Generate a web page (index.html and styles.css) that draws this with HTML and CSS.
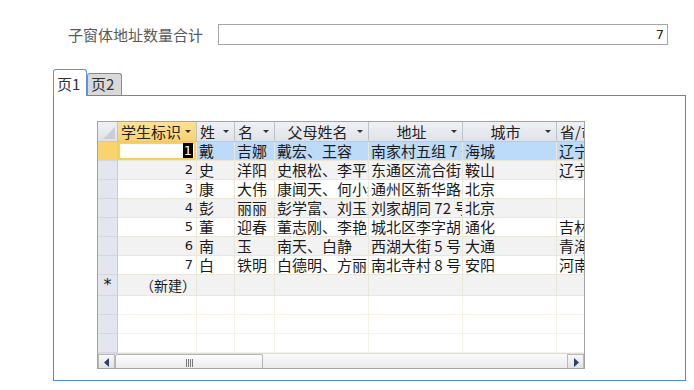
FILE: index.html
```html
<!DOCTYPE html>
<html lang="zh">
<head>
<meta charset="utf-8">
<link rel="stylesheet" href="styles.css">
</head>
<body>
<div class="summary">
  <span class="summary-label">子窗体地址数量合计</span>
  <div class="summary-box">7</div>
</div>
<div class="tabs">
  <div class="tab active">页1</div>
  <div class="tab">页2</div>
</div>
<div class="panel">
  <div class="sheet">
    <table class="grid">
      <colgroup>
        <col class="c-sel"><col class="c-id"><col class="c-xing"><col class="c-ming"><col class="c-fm"><col class="c-addr"><col class="c-city"><col class="c-prov">
      </colgroup>
      <thead>
        <tr>
          <th class="sel-all"><span class="corner"></span></th>
          <th class="hd hd-active"><span class="ht">学生标识</span><span class="dd"></span></th>
          <th class="hd"><span class="ht">姓</span><span class="dd"></span></th>
          <th class="hd"><span class="ht">名</span><span class="dd"></span></th>
          <th class="hd center"><span class="ht">父母姓名</span><span class="dd"></span></th>
          <th class="hd center"><span class="ht">地址</span><span class="dd"></span></th>
          <th class="hd center"><span class="ht">城市</span><span class="dd"></span></th>
          <th class="hd"><span class="ht">省/市</span><span class="dd"></span></th>
        </tr>
      </thead>
      <tbody>
        <tr class="row cur">
          <td class="rs rs-cur"></td>
          <td class="num focus"><span class="caret">1</span></td>
          <td>戴</td><td>吉娜</td><td>戴宏、王容</td><td>南家村五组 7 号</td><td>海城</td><td>辽宁</td>
        </tr>
        <tr class="row alt">
          <td class="rs"></td><td class="num">2</td>
          <td>史</td><td>洋阳</td><td>史根松、李平</td><td>东通区流合街</td><td>鞍山</td><td>辽宁</td>
        </tr>
        <tr class="row">
          <td class="rs"></td><td class="num">3</td>
          <td>康</td><td>大伟</td><td>康闻天、何小红</td><td>通州区新华路</td><td>北京</td><td></td>
        </tr>
        <tr class="row alt">
          <td class="rs"></td><td class="num">4</td>
          <td>彭</td><td>丽丽</td><td>彭学富、刘玉兰</td><td>刘家胡同 72 号</td><td>北京</td><td></td>
        </tr>
        <tr class="row">
          <td class="rs"></td><td class="num">5</td>
          <td>董</td><td>迎春</td><td>董志刚、李艳</td><td>城北区李字胡同</td><td>通化</td><td>吉林</td>
        </tr>
        <tr class="row alt">
          <td class="rs"></td><td class="num">6</td>
          <td>南</td><td>玉</td><td>南天、白静</td><td>西湖大街 5 号</td><td>大通</td><td>青海</td>
        </tr>
        <tr class="row">
          <td class="rs"></td><td class="num">7</td>
          <td>白</td><td>铁明</td><td>白德明、方丽</td><td>南北寺村 8 号</td><td>安阳</td><td>河南</td>
        </tr>
        <tr class="row alt newrow">
          <td class="rs star">*</td><td class="newtxt">（新建）</td>
          <td></td><td></td><td></td><td></td><td></td><td></td>
        </tr>
        <tr class="row empty"><td class="rs"></td><td></td><td></td><td></td><td></td><td></td><td></td><td></td></tr>
        <tr class="row empty"><td class="rs"></td><td></td><td></td><td></td><td></td><td></td><td></td><td></td></tr>
        <tr class="row empty"><td class="rs"></td><td></td><td></td><td></td><td></td><td></td><td></td><td></td></tr>
      </tbody>
    </table>
    <div class="hscroll">
      <div class="sbtn"><svg width="6" height="9" viewBox="0 0 6 9"><path d="M5 0 L0 4.5 L5 9 Z" fill="#2d3f6b"/></svg></div>
      <div class="thumb"><span class="grip"></span></div>
      <div class="track"></div>
      <div class="sbtn"><svg width="6" height="9" viewBox="0 0 6 9"><path d="M1 0 L6 4.5 L1 9 Z" fill="#2d3f6b"/></svg></div>
    </div>
  </div>
</div>
</body>
</html>
```
FILE: styles.css
```css
html, body {
  margin: 0;
  padding: 0;
  background: #ffffff;
}
body {
  font-family: "Noto Sans CJK SC", "Noto Sans", sans-serif;
  color: #1a1a1a;
  width: 694px;
  height: 390px;
  overflow: hidden;
}
.summary {
  display: flex;
  align-items: center;
  padding: 24px 0 0 68px;
  height: 21px;
}
.summary-label {
  font-size: 15px;
  line-height: 21px;
  color: #5a5a5a;
  width: 150px;
  white-space: nowrap;
}
.summary-box {
  width: 445px;
  height: 19px;
  border: 1px solid #a6a6a6;
  font-family: "DejaVu Sans", sans-serif;
  font-size: 13px;
  line-height: 19px;
  text-align: right;
  padding-right: 3px;
  color: #222;
  box-sizing: content-box;
}
.tabs {
  display: flex;
  align-items: flex-end;
  margin: 24px 0 0 53px;
  height: 26px;
}
.tab {
  font-size: 15px;
  line-height: 20px;
  padding: 0 3px;
  height: 22px;
  border: 1px solid #5b95d9;
  border-bottom: none;
  border-radius: 3px 3px 0 0;
  background: #d9d9d9;
  color: #333;
  box-sizing: border-box;
  width: 35px;
}
.tab.active {
  height: 27px;
  width: 34px;
  background: #ffffff;
  line-height: 27px;
  position: relative;
  top: 1px;
  z-index: 1;
}
.panel {
  margin-left: 53px;
  width: 633px;
  height: 286px;
  border: 1px solid #4f8cd6;
  box-sizing: border-box;
  padding: 25px 0 0 43px;
}
.sheet {
  width: 488px;
  height: 248px;
  border: 1px solid #a3a3a3;
  box-sizing: border-box;
  overflow: hidden;
  background: #ffffff;
  display: flex;
  flex-direction: column;
}
.grid {
  border-collapse: separate;
  border-spacing: 0;
  table-layout: fixed;
  width: 520px;
  font-size: 15px;
}
.c-sel { width: 20px; }
.c-id { width: 79px; }
.c-xing { width: 38px; }
.c-ming { width: 40px; }
.c-fm { width: 94px; }
.c-addr { width: 94px; }
.c-city { width: 94px; }
.c-prov { width: 61px; }
th, td {
  padding: 0 0 0 2px;
  white-space: nowrap;
  overflow: hidden;
  text-overflow: clip;
  box-sizing: border-box;
}
thead th {
  height: 20px;
  font-weight: normal;
  font-size: 15px;
  line-height: 19px;
  background: linear-gradient(#eef0f4, #dfe3e9);
  border-right: 1px solid #bcc3cd;
  border-bottom: 1px solid #c3c9d1;
  text-align: left;
  position: relative;
  color: #222;
}
thead th.center { text-align: center; }
thead th.hd-active {
  background: linear-gradient(#fbe196, #f7d272);
}
.corner {
  position: absolute;
  right: 2px;
  bottom: 2px;
  width: 0;
  height: 0;
  border-left: 12px solid transparent;
  border-bottom: 12px solid #c9ced6;
}
.ht { padding-left: 1px; }
.center .ht { padding-left: 0; padding-right: 10px; }
.dd {
  position: absolute;
  right: 5px;
  top: 8px;
  width: 0;
  height: 0;
  border-left: 3px solid transparent;
  border-right: 3px solid transparent;
  border-top: 3px solid #333;
}
tbody td {
  height: 19px;
  line-height: 18px;
  border-right: 1px solid #ebe7d6;
  border-bottom: 1px solid #ebe7d6;
  color: #1a1a1a;
}
tbody tr.row { background: #ffffff; }
tbody tr.alt { background: #f2f2f2; }
tbody tr.cur { background: #bcdbfa; }
tbody tr.empty td { border-color: #f6f3e6; background: #ffffff; }
td.rs {
  background: #e3e6ec;
  border-right: 1px solid #c7ccd4;
  border-bottom: 1px solid #d3d7de;
  padding: 0;
}
tbody tr.empty td.rs { background: #e3e6ec; border-color: #d3d7de #c7ccd4; }
td.rs-cur { background: #f9d46e; }
td.star {
  text-align: center;
  font-size: 16px;
  line-height: 20px;
  font-family: "DejaVu Sans", sans-serif;
}
td.num {
  text-align: right;
  padding-right: 3px;
  font-family: "DejaVu Sans", sans-serif;
  font-size: 13px;
}
td.focus {
  background: #ffffff;
  box-shadow: inset 0 0 0 2px #f6d064;
}
.caret {
  background: #000;
  color: #fff;
  padding: 0 1px;
}
td.newtxt {
  padding-left: 22px;
  font-size: 14px;
}
.hscroll {
  margin-top: auto;
  height: 17px;
  display: flex;
  background: linear-gradient(#fafafa, #e8e8e8);
  border-top: 1px solid #dcdcdc;
}
.sbtn {
  width: 17px;
  height: 17px;
  box-sizing: border-box;
  border: 1px solid #b9b9b9;
  background: linear-gradient(#f8f8f8, #dedede);
  display: flex;
  align-items: center;
  justify-content: center;
}
.thumb {
  width: 148px;
  height: 17px;
  box-sizing: border-box;
  border: 1px solid #b4b4b4;
  border-radius: 2px;
  background: linear-gradient(#fdfdfd, #e9e9e9);
  display: flex;
  align-items: center;
  justify-content: center;
}
.grip {
  width: 7px;
  height: 8px;
  background: repeating-linear-gradient(90deg, #777 0 1px, transparent 1px 2px);
}
.track { flex: 1; }
```
